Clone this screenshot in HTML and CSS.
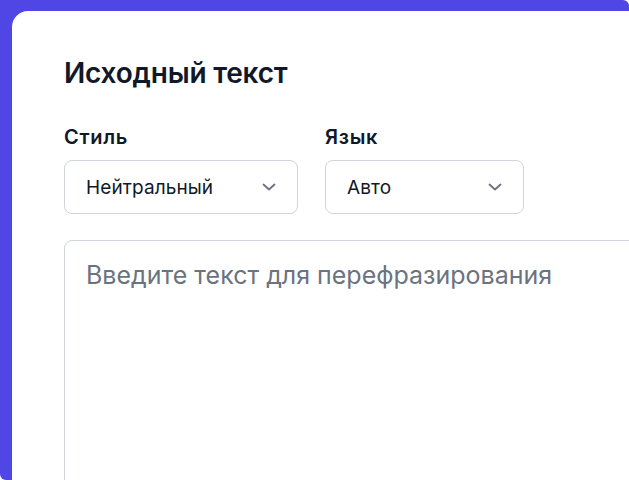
FILE: index.html
```html
<!DOCTYPE html>
<html lang="ru">
<head>
<meta charset="utf-8">
<link rel="stylesheet" href="styles.css">
</head>
<body>
<div class="frame">
  <section class="card">
    <h2 class="title">Исходный текст</h2>
    <div class="options">
      <div class="field field-style">
        <label class="label">Стиль</label>
        <div class="select">
          <span>Нейтральный</span>
          <svg class="chev" width="14" height="8" viewBox="0 0 14 8" fill="none"><path d="M1.5 1.5 L7 6.5 L12.5 1.5" stroke="#6b7280" stroke-width="1.8" stroke-linecap="round" stroke-linejoin="round"/></svg>
        </div>
      </div>
      <div class="field field-lang">
        <label class="label">Язык</label>
        <div class="select">
          <span>Авто</span>
          <svg class="chev" width="14" height="8" viewBox="0 0 14 8" fill="none"><path d="M1.5 1.5 L7 6.5 L12.5 1.5" stroke="#6b7280" stroke-width="1.8" stroke-linecap="round" stroke-linejoin="round"/></svg>
        </div>
      </div>
    </div>
    <div class="textarea">
      <span class="placeholder">Введите текст для перефразирования</span>
    </div>
  </section>
</div>
</body>
</html>
```
FILE: styles.css
```css
html, body {
  margin: 0;
  padding: 0;
  height: 100%;
  overflow: hidden;
}
body {
  background: #fff;
  font-family: Inter, "Noto Sans", sans-serif;
}
.frame {
  background: #4f46e5;
  height: 480px;
  width: 629px;
  border-radius: 0 6px 0 6px;
  padding: 11px 0 0 12px;
  box-sizing: border-box;
  overflow: hidden;
}
.card {
  background: #fff;
  border-radius: 16px 0 0 0;
  height: 600px;
  width: 700px;
  padding: 45px 0 0 52px;
  box-sizing: border-box;
}
.title {
  margin: 0;
  font-size: 28px;
  line-height: 34px;
  font-weight: 600;
  color: #111827;
  letter-spacing: -0.2px;
}
.options {
  display: flex;
  gap: 27px;
  margin-top: 35px;
}
.field {
  display: flex;
  flex-direction: column;
  gap: 11px;
}
.field-style { width: 234px; }
.field-lang { width: 199px; }
.label {
  font-size: 20px;
  line-height: 24px;
  font-weight: 600;
  color: #111827;
  letter-spacing: 0.7px;
}
.select {
  height: 54px;
  box-sizing: border-box;
  border: 1px solid #d1d5db;
  border-radius: 8px;
  display: flex;
  align-items: center;
  justify-content: space-between;
  padding: 0 21px 0 21px;
  font-size: 19px;
  color: #111827;
  letter-spacing: 0.1px;
}
.chev { display: block; }
.textarea {
  margin-top: 26px;
  width: 640px;
  height: 300px;
  box-sizing: border-box;
  border: 1px solid #d1d5db;
  border-radius: 8px;
  padding: 19px 21px;
}
.placeholder {
  font-size: 25px;
  line-height: 30px;
  color: #6b7280;
}
```
